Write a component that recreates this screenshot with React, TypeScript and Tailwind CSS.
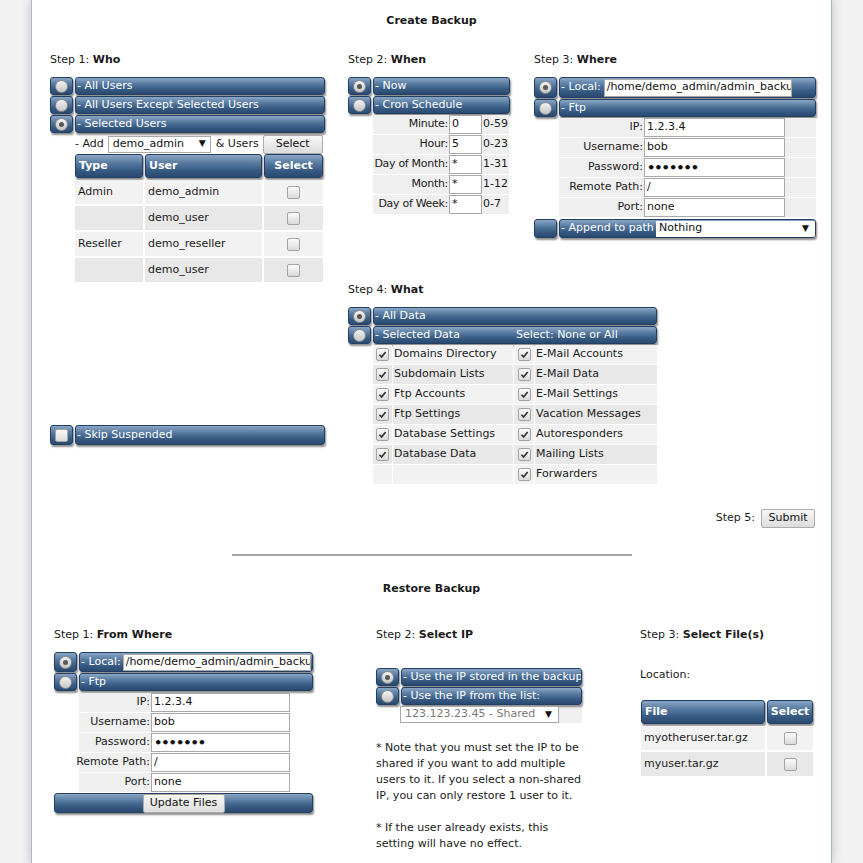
import type { ReactNode } from 'react'

const bar =
  'rounded-[3px] border border-[#233f63] bg-[linear-gradient(#8aa6c5,#56799f_38%,#385c84_68%,#2a4970)] shadow-[1px_2px_2px_rgba(0,0,0,0.45)]'

function Radio({ on = false }: { on?: boolean }) {
  return (
    <span className="flex h-[13px] w-[13px] items-center justify-center rounded-full border border-[#8e8e8e] bg-[linear-gradient(#f3f3f3,#c6c6c6)]">
      {on && <span className="h-[5px] w-[5px] rounded-full bg-[#575757]" />}
    </span>
  )
}

function Check({ on = false }: { on?: boolean }) {
  return (
    <span className="flex h-[13px] w-[13px] items-center justify-center rounded-[2px] border border-[#a3a3a3] bg-[linear-gradient(#fbfbfb,#dadada)]">
      {on && (
        <svg viewBox="0 0 10 10" className="h-[9px] w-[9px]">
          <path d="M1.6 5.3 L4 7.7 L8.5 2.2" fill="none" stroke="#333" strokeWidth="1.8" />
        </svg>
      )}
    </span>
  )
}

function Opt({
  kind = 'radio',
  on = false,
  h = 'h-[18px]',
  children,
}: {
  kind?: 'radio' | 'check' | 'none'
  on?: boolean
  h?: string
  children: ReactNode
}) {
  return (
    <div className={`mb-px flex gap-[2px] ${h}`}>
      <div className={`${bar} flex w-[23px] shrink-0 items-center justify-center`}>
        {kind === 'radio' && <Radio on={on} />}
        {kind === 'check' && <Check />}
      </div>
      <div className={`${bar} flex min-w-0 flex-1 items-center overflow-hidden whitespace-nowrap pl-px text-white`}>
        {children}
      </div>
    </div>
  )
}

function Field({ value, w }: { value: string; w: string }) {
  return (
    <span className={`flex h-full items-center overflow-hidden whitespace-nowrap border border-[#a9a9a9] bg-white px-[2px] text-[#111] ${w}`}>
      {value}
    </span>
  )
}

function Dots() {
  return <span className="text-[13px] font-bold leading-none tracking-[-1px]">•••••••</span>
}

function Heading({ n, title }: { n: number; title: string }) {
  return (
    <div className="h-[18px] whitespace-nowrap pt-[2px] leading-[16px]">
      Step {n}: <b>{title}</b>
    </div>
  )
}

function Button({ children, w }: { children: ReactNode; w: string }) {
  return (
    <span className={`flex h-[19px] items-center justify-center rounded-[2px] border border-[#acacac] bg-[linear-gradient(#f7f7f7,#dddddd)] text-[#111] ${w}`}>
      {children}
    </span>
  )
}

function FtpRows({ label, input, tail }: { label: string; input: string; tail?: string }) {
  const rows: [string, ReactNode][] = [
    ['IP:', '1.2.3.4'],
    ['Username:', 'bob'],
    ['Password:', <Dots key="d" />],
    ['Remote Path:', '/'],
    ['Port:', 'none'],
  ]
  return (
    <div>
      {rows.map(([l, v]) => (
        <div key={l} className="mb-px flex h-[19px]">
          <div className={`flex items-center justify-end whitespace-nowrap bg-[#efefef] pr-px ${label}`}>{l}</div>
          <span className={`flex h-full items-center border border-[#a9a9a9] bg-white px-[2px] text-[#111] ${input}`}>{v}</span>
          {tail && <div className={`bg-[#efefef] ${tail}`} />}
        </div>
      ))}
    </div>
  )
}

const users = [
  ['Admin', 'demo_admin'],
  ['', 'demo_user'],
  ['Reseller', 'demo_reseller'],
  ['', 'demo_user'],
]

const cron = [
  ['Minute:', '0', '0-59'],
  ['Hour:', '5', '0-23'],
  ['Day of Month:', '*', '1-31'],
  ['Month:', '*', '1-12'],
  ['Day of Week:', '*', '0-7'],
]

const what = [
  ['Domains Directory', 'E-Mail Accounts'],
  ['Subdomain Lists', 'E-Mail Data'],
  ['Ftp Accounts', 'E-Mail Settings'],
  ['Ftp Settings', 'Vacation Messages'],
  ['Database Settings', 'Autoresponders'],
  ['Database Data', 'Mailing Lists'],
  ['', 'Forwarders'],
]

const head = `${bar} flex h-[24px] items-center font-bold text-white`

export default function App() {
  return (
    <div className="min-h-[863px] bg-[#f2f2f2] px-[31px] font-['DejaVu_Sans',Verdana,sans-serif] text-[11px] text-[#1a1a1a]">
      <div className="h-[863px] overflow-hidden border-x border-[#a5b8cf] bg-white shadow-[0_0_10px_rgba(0,0,0,0.22)]">
        <div className="flex h-[40px] items-center justify-center pt-[2px] font-bold">Create Backup</div>

        <div className="mt-[10px] flex items-start pl-[18px]">
          {/* Step 1 */}
          <div className="w-[275px]">
            <Heading n={1} title="Who" />
            <div className="mt-[9px]">
              <Opt>- All Users</Opt>
              <Opt>- All Users Except Selected Users</Opt>
              <Opt on>- Selected Users</Opt>
            </div>
            <div className="ml-[25px] flex h-[20px] items-center whitespace-nowrap">
              <span>- Add</span>
              <span className="ml-[4px] flex h-[17px] w-[103px] items-center justify-between border border-[#a9a9a9] bg-white px-[4px] text-[#111]">
                demo_admin <span className="text-[9px]">▼</span>
              </span>
              <span className="ml-[5px]">&amp; Users</span>
              <span className="ml-[4px]">
                <Button w="w-[60px]">Select</Button>
              </span>
            </div>
            <div className="ml-[25px] grid grid-cols-[68px_117px_59px] gap-[2px]">
              <div className={`${head} pl-[3px]`}>Type</div>
              <div className={`${head} pl-[3px]`}>User</div>
              <div className={`${head} justify-center`}>Select</div>
              {users.map(([t, u], i) => {
                const bg = i % 2 ? 'bg-[#e8e8e8]' : 'bg-[#f2f2f2]'
                return [
                  <div key={`t${i}`} className={`flex h-[24px] items-center pl-[3px] ${bg}`}>{t}</div>,
                  <div key={`u${i}`} className={`flex h-[24px] items-center pl-[3px] ${bg}`}>{u}</div>,
                  <div key={`s${i}`} className={`flex h-[24px] items-center justify-center ${bg}`}>
                    <Check />
                  </div>,
                ]
              })}
            </div>
            <div className="mt-[143px]">
              <Opt kind="check" h="h-[20px]">
                - Skip Suspended
              </Opt>
            </div>
          </div>

          <div className="ml-[23px]">
            <div className="flex items-start">
              {/* Step 2 */}
              <div className="w-[162px]">
                <Heading n={2} title="When" />
                <div className="mt-[9px]">
                  <Opt on>- Now</Opt>
                  <Opt>- Cron Schedule</Opt>
                </div>
                <div className="ml-[25px]">
                  {cron.map(([l, v, r]) => (
                    <div key={l} className="mb-px flex h-[19px]">
                      <div className="flex w-[76px] items-center justify-end whitespace-nowrap bg-[#efefef] pr-px tracking-[-0.3px]">
                        {l}
                      </div>
                      <Field value={v} w="w-[33px]" />
                      <div className="flex w-[27px] items-center bg-[#efefef] pl-px">{r}</div>
                    </div>
                  ))}
                </div>
              </div>

              {/* Step 3 */}
              <div className="ml-[24px] w-[282px]">
                <Heading n={3} title="Where" />
                <div className="mt-[9px]">
                  <Opt on h="h-[21px]">
                    <span className="mr-[3px]">- Local:</span>
                    <span className="h-[18px]">
                      <Field value="/home/demo_admin/admin_backups" w="w-[188px]" />
                    </span>
                  </Opt>
                  <Opt>- Ftp</Opt>
                </div>
                <div className="ml-[25px]">
                  <FtpRows label="w-[85px]" input="w-[141px]" tail="w-[31px]" />
                </div>
                <div className="mt-[2px]">
                  <Opt kind="none" h="h-[19px]">
                    <span className="w-[95px] shrink-0">- Append to path</span>
                    <span className="flex h-[16px] flex-1 items-center justify-between bg-white pl-[3px] pr-[6px] text-[#111]">
                      Nothing <span className="text-[9px]">▼</span>
                    </span>
                  </Opt>
                </div>
              </div>
            </div>

            {/* Step 4 */}
            <div className="mt-[41px] w-[309px]">
              <Heading n={4} title="What" />
              <div className="mt-[9px]">
                <Opt on>- All Data</Opt>
                <Opt>
                  <span className="w-[141px] shrink-0">- Selected Data</span>
                  <span>Select: None or All</span>
                </Opt>
              </div>
              <div className="ml-[25px] grid grid-cols-[19px_120px_20px_122px] gap-px whitespace-nowrap">
                {what.map(([a, b], i) => {
                  const bg = i % 2 ? 'bg-[#e8e8e8]' : 'bg-[#f2f2f2]'
                  return [
                    <div key={`ac${i}`} className={`flex h-[19px] items-center justify-center ${bg}`}>
                      {a && <Check on />}
                    </div>,
                    <div key={`al${i}`} className={`flex h-[19px] items-center pl-px ${bg}`}>{a}</div>,
                    <div key={`bc${i}`} className={`flex h-[19px] items-center justify-center ${bg}`}>
                      <Check on />
                    </div>,
                    <div key={`bl${i}`} className={`flex h-[19px] items-center pl-px ${bg}`}>{b}</div>,
                  ]
                })}
              </div>
            </div>
          </div>
        </div>

        <div className="mt-[24px] flex h-[20px] items-center justify-end pr-[16px]">
          <span>Step 5:</span>
          <span className="ml-[6px]">
            <Button w="w-[54px]">Submit</Button>
          </span>
        </div>

        <div className="mx-auto mt-[26px] w-[400px] border-t-2 border-[#a6a6a6]" />

        <div className="mt-[22px] flex h-[20px] items-center justify-center pt-[2px] font-bold">Restore Backup</div>

        <div className="mt-[27px] flex items-start pl-[22px]">
          {/* Restore step 1 */}
          <div className="w-[259px]">
            <Heading n={1} title="From Where" />
            <div className="mt-[9px]">
              <Opt on h="h-[20px]">
                <span className="mr-[2px] shrink-0">- Local:</span>
                <span className="h-[17px] min-w-0 flex-1 pr-px">
                  <Field value="/home/demo_admin/admin_backups" w="w-full" />
                </span>
              </Opt>
              <Opt>- Ftp</Opt>
            </div>
            <div className="ml-[25px] mt-[2px]">
              <FtpRows label="w-[72px]" input="w-[139px]" />
            </div>
            <div className={`${bar} mt-[1px] flex h-[20px] items-center justify-center`}>
              <span className="h-[18px]">
                <Button w="w-[82px] h-[18px]">Update Files</Button>
              </span>
            </div>
          </div>

          {/* Restore step 2 */}
          <div className="ml-[63px] w-[206px]">
            <Heading n={2} title="Select IP" />
            <div className="mt-[25px]">
              <Opt on>- Use the IP stored in the backup</Opt>
              <Opt>- Use the IP from the list:</Opt>
            </div>
            <div className="ml-[24px] flex h-[17px] bg-[#efefef]">
              <span className="flex w-[159px] items-center justify-between whitespace-nowrap border border-[#a9a9a9] bg-white pl-[4px] pr-[6px] text-[#7a7a7a]">
                123.123.23.45 - Shared <span className="text-[9px] text-[#111]">▼</span>
              </span>
            </div>
            <p className="mt-[17px] whitespace-nowrap leading-[16px]">
              * Note that you must set the IP to be
              <br />
              shared if you want to add multiple
              <br />
              users to it. If you select a non-shared
              <br />
              IP, you can only restore 1 user to it.
              <br />
              <br />
              * If the user already exists, this
              <br />
              setting will have no effect.
            </p>
          </div>

          {/* Restore step 3 */}
          <div className="ml-[58px] w-[173px]">
            <Heading n={3} title="Select File(s)" />
            <div className="mt-[23px] h-[18px] leading-[18px]">Location:</div>
            <div className="ml-px mt-[16px] grid grid-cols-[124px_46px] gap-[2px]">
              <div className={`${head} pl-[3px]`}>File</div>
              <div className={`${head} justify-center`}>Select</div>
              {['myotheruser.tar.gz', 'myuser.tar.gz'].map((f, i) => {
                const bg = i % 2 ? 'bg-[#e8e8e8]' : 'bg-[#f2f2f2]'
                return [
                  <div key={`f${i}`} className={`flex h-[24px] items-center pl-[3px] ${bg}`}>{f}</div>,
                  <div key={`c${i}`} className={`flex h-[24px] items-center justify-center ${bg}`}>
                    <Check />
                  </div>,
                ]
              })}
            </div>
          </div>
        </div>
      </div>
    </div>
  )
}
